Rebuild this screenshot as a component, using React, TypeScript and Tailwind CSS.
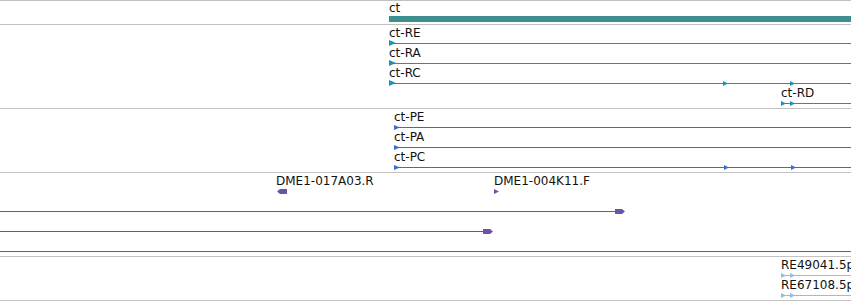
import React from "react";

// colours picked from the track glyphs
const TEAL = "#3d8f90";
const TRANSCRIPT = "#1b92b5";
const PROTEIN = "#3a6dc9";
const CLONE = "#6d53a8";
const EST = "#8dc0e2";

type ArrowProps = { x: number; w?: number; h?: number; color: string };

// small strand triangle sitting on the feature line of its row
function Arrow({ x, w = 5, h = 5, color }: ArrowProps) {
  return (
    <svg
      className="absolute"
      style={{ left: x, top: 18 - Math.floor(h / 2) }}
      width={w}
      height={h}
      viewBox={`0 0 ${w} ${h}`}
    >
      <polygon points={`0,0 ${w},${h / 2} 0,${h}`} fill={color} />
    </svg>
  );
}

// thick block with a pointed end (clone ends)
function Head({ x, color, left }: { x: number; color: string; left?: boolean }) {
  const pts = left ? "0,2.5 3,0 10,0 10,5 3,5" : "0,0 7,0 10,2.5 7,5 0,5";
  return (
    <svg className="absolute top-[16px]" style={{ left: x }} width={10} height={5} viewBox="0 0 10 5">
      <polygon points={pts} fill={color} />
    </svg>
  );
}

function Line({ x1, x2 = 851, color }: { x1: number; x2?: number; color: string }) {
  return <div className="absolute top-[18px] h-px" style={{ left: x1, width: x2 - x1, background: color }} />;
}

function Label({ x, children }: { x: number; children: React.ReactNode }) {
  return (
    <span
      className="absolute top-[1px] whitespace-nowrap text-[12px] leading-[14px] text-[#111] font-['DejaVu_Sans',sans-serif]"
      style={{ left: x }}
    >
      {children}
    </span>
  );
}

function Row({ children }: { children: React.ReactNode }) {
  return <div className="relative h-[20px] shrink-0">{children}</div>;
}

const transcripts = [
  { name: "ct-RE", arrows: [] as number[] },
  { name: "ct-RA", arrows: [] as number[] },
  { name: "ct-RC", arrows: [723, 790] },
];

const proteins = [
  { name: "ct-PE", arrows: [] as number[] },
  { name: "ct-PA", arrows: [] as number[] },
  { name: "ct-PC", arrows: [724, 791] },
];

export default function App() {
  return (
    <div className="w-[851px] h-[301px] bg-white overflow-hidden">
      <div className="flex flex-col border-t border-[#c2c2c2]">
        {/* gene */}
        <div className="flex h-[24px] border-b border-[#c2c2c2] pl-[389px]">
          <div className="flex flex-1 flex-col">
            <span className="text-[12px] leading-[14px] text-[#111] font-['DejaVu_Sans',sans-serif]">ct</span>
            <div className="mt-px h-[6px]" style={{ background: TEAL }} />
          </div>
        </div>

        {/* transcripts */}
        <div className="flex h-[84px] flex-col border-b border-[#c2c2c2]">
          {transcripts.map((t) => (
            <Row key={t.name}>
              <Label x={389}>{t.name}</Label>
              <Line x1={389} color={TRANSCRIPT} />
              <Arrow x={389} w={7} h={6} color={TRANSCRIPT} />
              {t.arrows.map((a) => (
                <Arrow key={a} x={a} color={TRANSCRIPT} />
              ))}
            </Row>
          ))}
          <Row>
            <Label x={781}>ct-RD</Label>
            <Line x1={781} color={TRANSCRIPT} />
            <Arrow x={781} color={TRANSCRIPT} />
            <Arrow x={790} color={TRANSCRIPT} />
          </Row>
        </div>

        {/* polypeptides */}
        <div className="flex h-[64px] flex-col border-b border-[#c2c2c2]">
          {proteins.map((p) => (
            <Row key={p.name}>
              <Label x={394}>{p.name}</Label>
              <Line x1={394} color={PROTEIN} />
              <Arrow x={394} w={6} h={5} color={PROTEIN} />
              {p.arrows.map((a) => (
                <Arrow key={a} x={a} color={PROTEIN} />
              ))}
            </Row>
          ))}
        </div>

        {/* BAC ends */}
        <div className="flex h-[84px] flex-col border-b border-[#c2c2c2]">
          <Row>
            <Label x={276}>DME1-017A03.R</Label>
            <Head x={277} color={CLONE} left />
            <Label x={494}>DME1-004K11.F</Label>
            <Arrow x={494} color={CLONE} />
          </Row>
          <Row>
            <Line x1={0} x2={616} color={CLONE} />
            <Head x={615} color={CLONE} />
          </Row>
          <Row>
            <Line x1={0} x2={484} color={CLONE} />
            <Head x={483} color={CLONE} />
          </Row>
          <Row>
            <Line x1={0} color={CLONE} />
          </Row>
        </div>

        {/* ESTs */}
        <div className="flex h-[44px] flex-col border-b border-[#c2c2c2]">
          {["RE49041.5p", "RE67108.5p"].map((n) => (
            <Row key={n}>
              <Label x={781}>{n}</Label>
              <Line x1={781} color={EST} />
              <Arrow x={781} color={EST} />
              <Arrow x={790} color={EST} />
            </Row>
          ))}
        </div>
      </div>
    </div>
  );
}
